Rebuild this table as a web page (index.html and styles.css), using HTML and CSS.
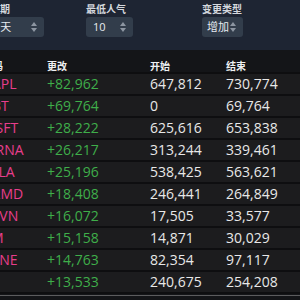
FILE: index.html
```html
<!DOCTYPE html>
<html lang="zh-CN">
<head>
<meta charset="utf-8">
<title>人气变更</title>
<link rel="stylesheet" href="styles.css">
</head>
<body>
<div class="page">
  <div class="filters">
    <div class="field">
      <div class="label">时间周期</div>
      <div class="select w-period"><span class="val">近1天</span><svg class="arr" width="6" height="10" viewBox="0 0 6 10"><path d="M3 0 L6 4 L0 4 Z M3 10 L6 6 L0 6 Z" fill="#8d96a2"/></svg></div>
    </div>
    <div class="field">
      <div class="label">最低人气</div>
      <div class="select w-num"><span class="val">10</span><svg class="arr" width="6" height="10" viewBox="0 0 6 10"><path d="M3 0 L6 4 L0 4 Z M3 10 L6 6 L0 6 Z" fill="#8d96a2"/></svg></div>
    </div>
    <div class="field">
      <div class="label">变更类型</div>
      <div class="select w-type"><span class="val">增加</span><svg class="arr" width="6" height="10" viewBox="0 0 6 10"><path d="M3 0 L6 4 L0 4 Z M3 10 L6 6 L0 6 Z" fill="#8d96a2"/></svg></div>
    </div>
  </div>
  <div class="table">
    <div class="row head"><span>代码</span><span>更改</span><span>开始</span><span>结束</span></div>
    <div class="row"><span class="sym">AAPL</span><span class="chg">+82,962</span><span>647,812</span><span>730,774</span></div>
    <div class="row"><span class="sym">BBT</span><span class="chg">+69,764</span><span>0</span><span>69,764</span></div>
    <div class="row"><span class="sym">MSFT</span><span class="chg">+28,222</span><span>625,616</span><span>653,838</span></div>
    <div class="row"><span class="sym">MRNA</span><span class="chg">+26,217</span><span>313,244</span><span>339,461</span></div>
    <div class="row"><span class="sym">TSLA</span><span class="chg">+25,196</span><span>538,425</span><span>563,621</span></div>
    <div class="row"><span class="sym">CRMD</span><span class="chg">+18,408</span><span>246,441</span><span>264,849</span></div>
    <div class="row"><span class="sym">TRVN</span><span class="chg">+16,072</span><span>17,505</span><span>33,577</span></div>
    <div class="row"><span class="sym">ZM</span><span class="chg">+15,158</span><span>14,871</span><span>30,029</span></div>
    <div class="row"><span class="sym">CLNE</span><span class="chg">+14,763</span><span>82,354</span><span>97,117</span></div>
    <div class="row"><span class="sym">F</span><span class="chg">+13,533</span><span>240,675</span><span>254,208</span></div>
  </div>
  <div class="foot"></div>
</div>
</body>
</html>
```
FILE: styles.css
```css
html, body {
  margin: 0;
  padding: 0;
  background: #141518;
  overflow: hidden;
}
body {
  font-family: "Open Sans", "Noto Sans CJK SC", sans-serif;
  color: #e8e8e8;
}
.page {
  margin-left: -30px;
  width: 360px;
}
.filters {
  background: #1e2533;
  height: 50px;
  box-sizing: border-box;
  padding-top: 3px;
  display: grid;
  grid-template-columns: 116px 116px 116px;
}
.label {
  font-family: "Noto Sans CJK SC", sans-serif;
  font-size: 10px;
  font-weight: 700;
  line-height: 12px;
  color: #d4d8de;
  margin-bottom: 2px;
}
.select {
  height: 20px;
  box-sizing: border-box;
  background: #323d4b;
  border-radius: 3px;
  display: flex;
  align-items: center;
  justify-content: space-between;
  padding: 0 7px;
}
.w-period { width: 74px; padding-left: 13px; }
.w-num { width: 47px; }
.w-type { width: 41px; padding-left: 5px; padding-right: 7px; }
.val {
  font-family: "Open Sans", "Noto Sans CJK SC", sans-serif;
  font-size: 11px;
  line-height: 20px;
  color: #e6ebf0;
}
.arr { display: block; }
.table {
  padding-left: 13px;
}
.row {
  display: grid;
  grid-template-columns: 64px 103px 76px 1fr;
  font-size: 14px;
  line-height: 20px;
  background: #1c1c1e;
  border-bottom: 2px solid #0e0e10;
  white-space: nowrap;
}
.row.head {
  background: #141518;
  font-family: "Noto Sans CJK SC", sans-serif;
  font-size: 10px;
  font-weight: 700;
  line-height: 12px;
  padding-top: 10px;
  height: 24px;
  box-sizing: border-box;
  color: #eef0f2;
}
.sym { color: #e83e8c; }
.chg { color: #3fae4a; }
.foot {
  margin-top: 1px;
  height: 1px;
  background: #5c5c5e;
}
```
